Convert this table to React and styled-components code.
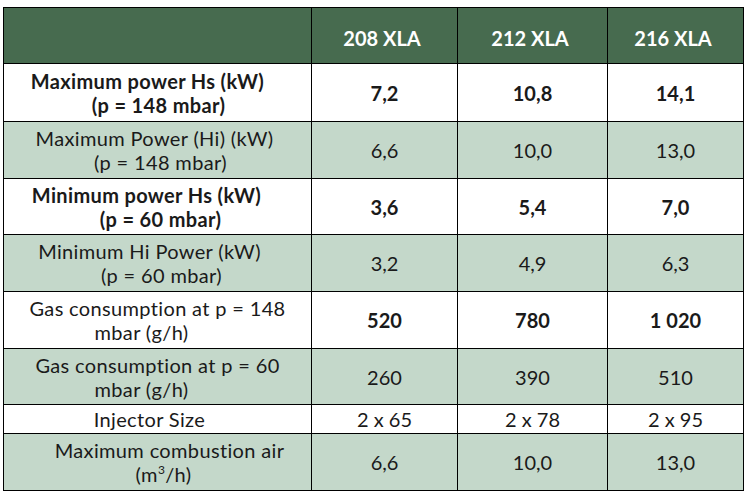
import React from "react";
import styled, { createGlobalStyle } from "styled-components";

const GlobalStyle = createGlobalStyle`
  html, body {
    margin: 0;
    padding: 0;
    background: #ffffff;
  }
  body {
    font-family: Lato, "Open Sans", "Liberation Sans", sans-serif;
    color: #1a1a1a;
  }
`;

const Page = styled.div`
  padding: 7px 0 0 3px;
`;

const Grid = styled.div`
  display: grid;
  grid-template-columns: 307px 145px 149px 135px;
  grid-template-rows: 55px 57px 56px 55px 56px 56px 55px 28px 56px;
  gap: 1px;
  padding: 1px;
  width: max-content;
  background: #000000;
`;

const Row = styled.div`
  display: contents;
  & > * {
    background: ${p =>
      p.$head ? "#476b4f" : p.$shade ? "#c4d8ca" : "#ffffff"};
    color: ${p => (p.$head ? "#ffffff" : "#1a1a1a")};
    font-weight: ${p => (p.$bold || p.$head ? 700 : 400)};
  }
`;

const Cell = styled.div`
  display: flex;
  flex-direction: column;
  align-items: stretch;
  justify-content: center;
  text-align: center;
  font-size: 20px;
  line-height: ${p => (p.$label ? "24px" : "22px")};
  letter-spacing: ${p => (p.$label ? "0.35px" : "0")};
  padding-top: ${p => (p.$head ? "5px" : "0")};
  padding-right: ${p => (p.$head ? "5px" : "0")};
`;

const Line = styled.span`
  display: block;
  white-space: nowrap;
  padding-left: ${p => p.$pl || 0}px;
  padding-right: ${p => p.$pr || 0}px;
`;

const Sup = styled.sup`
  font-size: 12px;
  line-height: 0;
  vertical-align: 8px;
`;

const ValueText = styled.span`
  font-weight: ${p => (p.$bold ? 700 : "inherit")};
`;

const models = ["208 XLA", "212 XLA", "216 XLA"];

const rows = [
  {
    label: [
      { text: "Maximum power Hs (kW)", pr: 20 },
      { text: "(p = 148 mbar)", pl: 2 }
    ],
    values: ["7,2", "10,8", "14,1"],
    bold: true
  },
  {
    label: [
      { text: "Maximum Power (Hi) (kW)", pr: 6 },
      { text: "(p = 148 mbar)", pl: 6 }
    ],
    values: ["6,6", "10,0", "13,0"],
    shade: true
  },
  {
    label: [
      { text: "Minimum power Hs (kW)", pr: 22 },
      { text: "(p = 60 mbar)", pl: 6 }
    ],
    values: ["3,6", "5,4", "7,0"],
    bold: true
  },
  {
    label: [
      { text: "Minimum Hi Power (kW)", pr: 16 },
      { text: "(p = 60 mbar)", pl: 8 }
    ],
    values: ["3,2", "4,9", "6,3"],
    shade: true
  },
  {
    label: [
      { text: "Gas consumption at p = 148" },
      { text: "mbar (g/h)", pr: 32 }
    ],
    values: ["520", "780", "1 020"],
    boldValues: true
  },
  {
    label: [
      { text: "Gas consumption at p = 60" },
      { text: "mbar (g/h)", pr: 32 }
    ],
    values: ["260", "390", "510"],
    shade: true
  },
  {
    label: [{ text: "Injector Size", pr: 16 }],
    values: ["2 x 65", "2 x 78", "2 x 95"]
  },
  {
    label: [
      { text: "Maximum combustion air", pl: 24 },
      {
        text: (
          <>
            (m<Sup>3</Sup>/h)
          </>
        ),
        pl: 12
      }
    ],
    values: ["6,6", "10,0", "13,0"],
    shade: true
  }
];

export default function App() {
  return (
    <Page>
      <GlobalStyle />
      <Grid>
        <Row $head>
          <Cell $head />
          {models.map(m => (
            <Cell $head key={m}>
              {m}
            </Cell>
          ))}
        </Row>
        {rows.map((r, i) => (
          <Row key={i} $shade={r.shade} $bold={r.bold}>
            <Cell $label>
              {r.label.map((l, j) => (
                <Line key={j} $pl={l.pl} $pr={l.pr}>
                  {l.text}
                </Line>
              ))}
            </Cell>
            {r.values.map((v, j) => (
              <Cell key={j}>
                <ValueText $bold={r.boldValues}>{v}</ValueText>
              </Cell>
            ))}
          </Row>
        ))}
      </Grid>
    </Page>
  );
}
